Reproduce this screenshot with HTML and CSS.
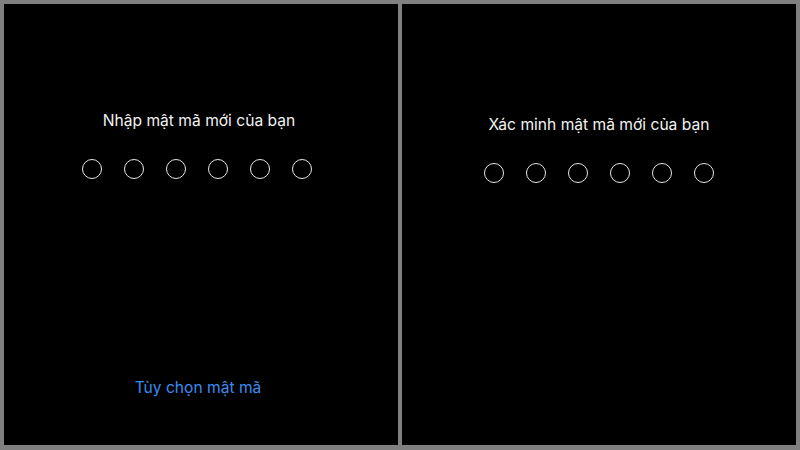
FILE: index.html
```html
<!DOCTYPE html>
<html lang="vi">
<head>
<meta charset="utf-8">
<link rel="stylesheet" href="styles.css">
</head>
<body>
<div class="frame">
  <section class="panel panel-left">
    <div class="title">Nhập mật mã mới của bạn</div>
    <div class="dots">
      <span class="dot"></span><span class="dot"></span><span class="dot"></span>
      <span class="dot"></span><span class="dot"></span><span class="dot"></span>
    </div>
    <div class="link">Tùy chọn mật mã</div>
  </section>
  <section class="panel panel-right">
    <div class="title">Xác minh mật mã mới của bạn</div>
    <div class="dots">
      <span class="dot"></span><span class="dot"></span><span class="dot"></span>
      <span class="dot"></span><span class="dot"></span><span class="dot"></span>
    </div>
  </section>
</div>
</body>
</html>
```
FILE: styles.css
```css
html, body {
  margin: 0;
  padding: 0;
}
body {
  width: 800px;
  height: 450px;
  background: #808080;
  font-family: Inter, "Noto Sans", "Liberation Sans", sans-serif;
  overflow: hidden;
}
.frame {
  box-sizing: border-box;
  width: 800px;
  height: 450px;
  padding: 4px 4px 5px 4px;
  display: flex;
  gap: 4px;
}
.panel {
  flex: 1;
  background: #000;
  display: flex;
  flex-direction: column;
  align-items: center;
  color: #f2f2f2;
}
.panel-left {
  padding-top: 107px;
}
.panel-left .title {
  margin-right: 4px;
}
.panel-left .dots {
  margin-right: 8px;
}
.panel-right {
  padding-top: 111px;
}
.title {
  font-size: 15.6px;
  line-height: 20px;
}
.dots {
  display: flex;
  gap: 22px;
  margin-top: 28px;
}
.dot {
  box-sizing: border-box;
  width: 20px;
  height: 20px;
  border: 1.5px solid #e6e6e6;
  border-radius: 50%;
}
.link {
  margin-top: auto;
  margin-bottom: 47px;
  margin-right: 6px;
  font-size: 15.6px;
  line-height: 20px;
  color: #3b8cf0;
}
```
